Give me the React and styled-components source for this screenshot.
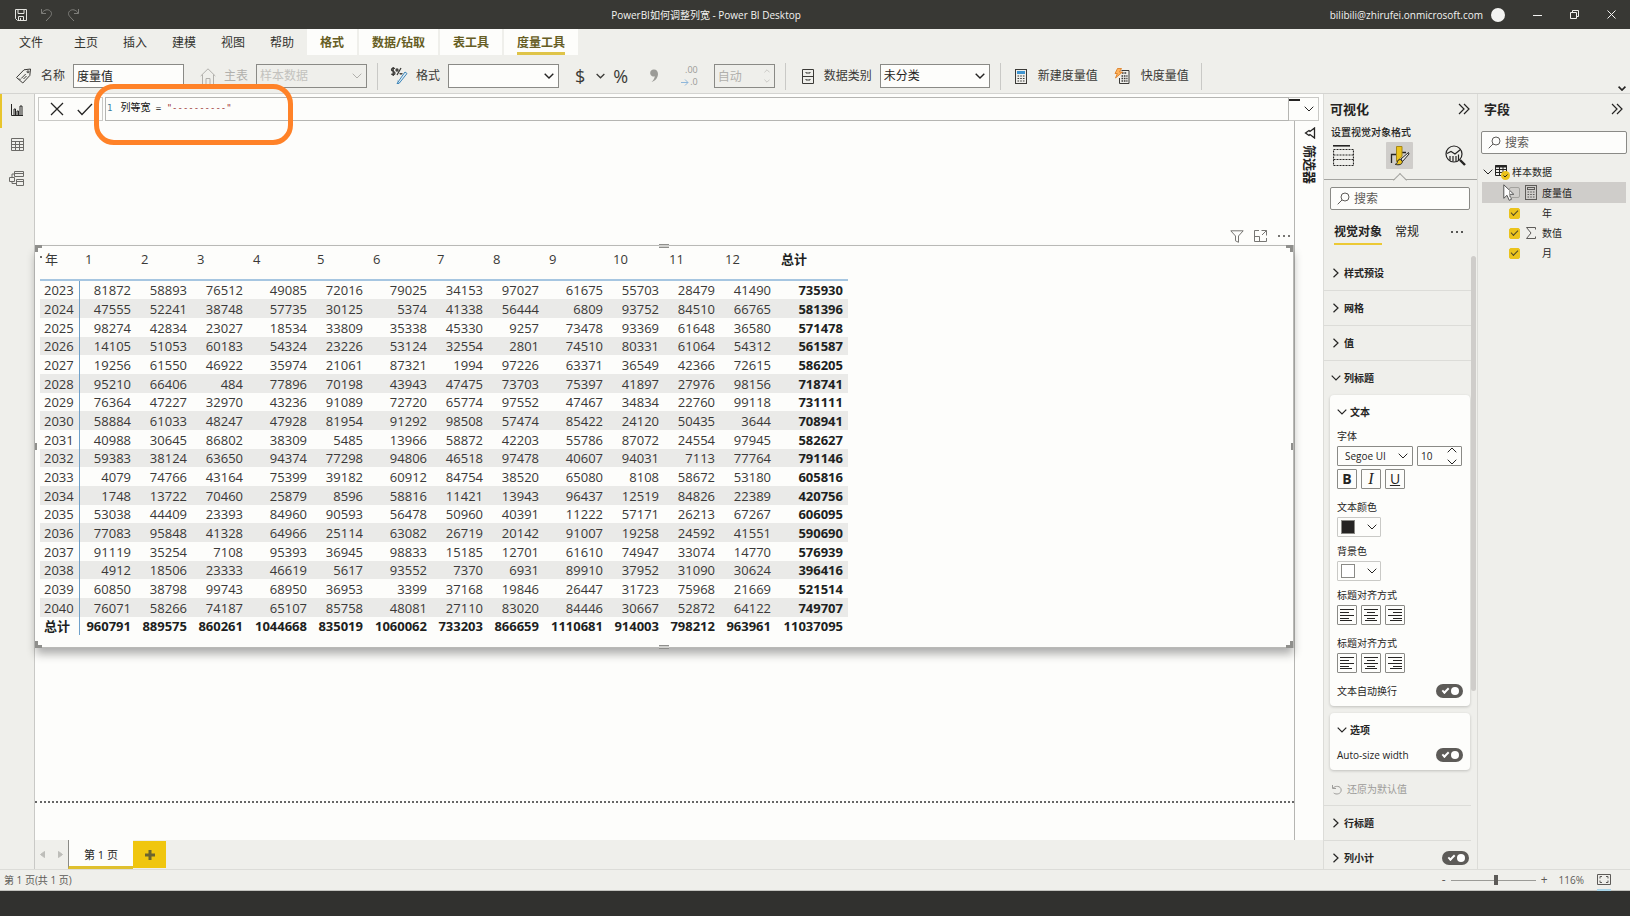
import React from "react";
import styled, { createGlobalStyle, css } from "styled-components";

const color = {
  title: "#383834",
  chrome: "#efefeb",
  paper: "#fdfdfb",
  line: "#c9c9c6",
  soft: "#dcdcd8",
  control: "#8a8a86",
  ink: "#252423",
  grey: "#5d5b58",
  muted: "#b1b0ac",
};

const Global = createGlobalStyle`
  *, *::before, *::after { box-sizing: border-box; }
  body {
    margin: 0;
    background: ${color.chrome};
    color: ${color.ink};
    font: 12px/16px "Open Sans", "Noto Sans CJK SC", sans-serif;
  }
  button, input, select { font: inherit; color: inherit; margin: 0; padding: 0; border: 0; background: none; border-radius: 0; }
  input, select { min-width: 0; outline: none; }
  h2, h3, p, ul { margin: 0; padding: 0; font: inherit; list-style: none; }
  svg { display: block; flex: none; }
`;

const Icon = ({ size = 16, w, h, box, sw = 1, children }) => (
  <svg
    width={w || size}
    height={h || size}
    viewBox={box || `0 0 ${w || size} ${h || size}`}
    fill="none"
    stroke="currentColor"
    strokeWidth={sw}
    aria-hidden="true"
  >
    {children}
  </svg>
);

const ChevronDown = ({ w = 10, h = 6, sw = 1 }) => (
  <Icon w={w} h={h} box="0 0 10 6" sw={sw}><path d="M.7.7 5 5 9.3.7" /></Icon>
);
const ChevronUp = ({ w = 10, h = 6 }) => (
  <Icon w={w} h={h} box="0 0 10 6"><path d="M.7 5.3 5 1l4.300 4.300" /></Icon>
);
const ChevronRight = () => (
  <Icon w={10} h={10} sw={1.200}><path d="M2.500.7 7 5 2.500 9.300" /></Icon>
);
const DoubleChevron = () => (
  <Icon w={12} h={12} sw={1.200}><path d="M1 1l5 5-5 5M6 1l5 5-5 5" /></Icon>
);
const SearchIcon = () => (
  <Icon w={13} h={13}><circle cx="8" cy="5" r="4" /><path d="M5 8 .7 12.300" /></Icon>
);
const CalcIcon = ({ tint = "none" }) => (
  <Icon w={12} h={15}>
    <rect x=".5" y=".5" width="11" height="14" />
    <rect x="2.500" y="2.500" width="7" height="2" fill={tint} stroke={tint === "none" ? "currentColor" : tint} />
    <path d="M2.500 7h7M2.500 9.500h7M2.500 12h7" strokeWidth="1.200" strokeDasharray="1.600 1.100" />
  </Icon>
);

/* Shell */
const Shell = styled.div`
  min-height: 100vh;
  display: grid;
  grid-template-columns: minmax(0, 1fr);
  grid-template-rows: auto auto auto minmax(0, 1fr) auto auto;
`;

const TitleBar = styled.header`
  height: 29px;
  display: grid;
  grid-template-columns: 1fr auto 1fr;
  align-items: center;
  background: ${color.title};
  color: #f3f3f1;
  font-size: 10px;
`;
const QuickActions = styled.div`
  display: flex;
  gap: 12px;
  padding-left: 14px;
`;
const QuickButton = styled.button`
  color: ${(p) => (p.$dim ? "#7e7e7a" : "#e4e4e0")};
`;
const WindowTitle = styled.div`
  white-space: nowrap;
  padding-right: 218px;
`;
const Account = styled.div`
  display: flex;
  align-items: center;
  justify-content: flex-end;
  gap: 8px;
`;
const Avatar = styled.span`
  width: 14px;
  height: 14px;
  border-radius: 50%;
  background: #f3f3f1;
`;
const WindowButtons = styled.div`
  display: flex;
  gap: 25px;
  padding: 0 13px 0 18px;
`;
const WindowButton = styled.button`
  display: grid;
  place-items: center;
  width: 12px;
  height: 12px;
`;

const MenuBar = styled.nav`
  height: 26px;
  display: flex;
  padding-left: 7px;
`;
const MenuTab = styled.button`
  position: relative;
  height: 26px;
  padding: 2px 13px 0 12px;
  white-space: nowrap;
  color: #33332f;
  ${(p) =>
    p.$context &&
    css`
      margin-right: 2px;
      padding: 2px 13px 0;
      background: ${color.paper};
      color: #665d24;
      font-weight: 700;
    `}
  ${(p) =>
    p.$active &&
    css`
      &::after {
        content: "";
        position: absolute;
        left: 13px;
        right: 13px;
        bottom: 0;
        height: 3px;
        background: #dfc448;
      }
    `}
`;
const Gap = styled.span`
  width: ${(p) => p.$w ?? 0}px;
`;

const Ribbon = styled.div`
  height: 39px;
  display: flex;
  align-items: center;
  padding: 4px 4px 0 15px;
  border-bottom: 1px solid #d4d4d1;
`;
const Group = styled.div`
  display: flex;
  align-items: center;
  gap: 8px;
  height: 27px;
  padding: 0 ${(p) => p.$end ?? 10}px 0 ${(p) => p.$start ?? 12}px;
  border-right: 1px solid ${color.line};
`;
const Pair = styled.label`
  display: flex;
  align-items: center;
  gap: 8px;
  white-space: nowrap;
  color: ${(p) => (p.$dim ? color.muted : "#3b3a37")};
`;
const RibbonButton = styled.button`
  display: flex;
  align-items: center;
  gap: 11px;
  height: 24px;
  white-space: nowrap;
  color: ${(p) => (p.$dim ? "#9b9b97" : "#3b3a37")};
`;
const Glyph = styled.span`
  font-size: 18px;
  line-height: 20px;
`;
const Decimals = styled.span`
  display: grid;
  justify-items: end;
  font-size: 9px;
  line-height: 12px;
  color: #9b9b97;
`;
const DecimalStep = styled.span`
  display: flex;
  align-items: center;
  gap: 1px;
  svg { color: #8fb7da; }
`;
const Box = styled.span`
  display: grid;
  align-items: center;
  width: ${(p) => p.$w}px;
  height: ${(p) => p.$h ?? 24}px;
  border: 1px solid ${color.control};
  border-radius: ${(p) => p.$r ?? 0}px;
  background: ${(p) => (p.$clear ? "transparent" : color.paper)};
  color: ${(p) => (p.$clear ? color.muted : color.ink)};
  > * { grid-area: 1 / 1; }
  > input, > select {
    width: 100%;
    height: 100%;
    padding-left: ${(p) => p.$pad ?? 3}px;
    appearance: none;
  }
  > svg { justify-self: end; margin-right: 4px; pointer-events: none; }
`;
const Spinner = styled.span`
  justify-self: end;
  display: grid;
  gap: 6px;
  margin-right: 4px;
`;
const Push = styled.button`
  margin-left: auto;
  align-self: flex-end;
  padding: 2px 0;
`;

const Body = styled.div`
  display: grid;
  grid-template-columns: 35px minmax(0, 1fr) 154px 153px;
  min-height: 0;
`;
const Rail = styled.nav`
  display: flex;
  flex-direction: column;
  border-right: 1px solid ${color.line};
`;
const RailButton = styled.button`
  display: grid;
  place-items: center;
  height: 34px;
  padding: 0 2px 2px 0;
  color: ${(p) => (p.$active ? color.ink : "#6b6a67")};
  border-left: 2px solid ${(p) => (p.$active ? "#e8c52c" : "transparent")};
`;

const Work = styled.main`
  display: flex;
  flex-direction: column;
  background: ${color.paper};
`;
const FormulaBar = styled.div`
  position: relative;
  display: flex;
  height: 27px;
  padding: 3px 4px 0 3px;
`;
const FormulaActions = styled.div`
  display: flex;
  align-items: center;
  justify-content: space-between;
  width: 65px;
  padding: 0 9px 0 11px;
  border: 1px solid ${color.line};
  margin-right: 2px;
`;
const Editor = styled.div`
  flex: 1;
  padding: 2px 1px;
  border: 1px solid #b5b5b2;
  font: 9px/16px "DejaVu Sans Mono", "Noto Sans CJK SC", monospace;
  white-space: pre;
  color: #111;
`;
const LineNumber = styled.span`
  margin-right: 8px;
  color: #3d7f9c;
`;
const MeasureName = styled.span`
  font-size: 10px;
`;
const StringToken = styled.span`
  color: #9c3535;
`;
const Expand = styled.button`
  display: grid;
  place-items: center;
  width: 30px;
  padding-left: 10px;
  border: 1px solid ${color.line};
  border-left: 0;
  position: relative;
  &::before {
    content: "";
    position: absolute;
    left: 0;
    top: 1px;
    width: 11px;
    height: 2px;
    background: ${color.ink};
  }
`;
const Callout = styled.div`
  position: absolute;
  z-index: 2;
  left: 59px;
  top: -10px;
  width: 199px;
  height: 61px;
  border: 5px solid #ff8228;
  border-radius: 20px;
  pointer-events: none;
`;
const Stage = styled.div`
  flex: 1;
  display: grid;
  grid-template-columns: minmax(0, 1fr) 28px;
`;
const Canvas = styled.section`
  display: flex;
  flex-direction: column;
  border-right: 1px solid #b5b5b2;
  padding-bottom: 37px;
`;
const Page = styled.div`
  flex: 1;
  padding: 106px 0 40px;
  border-bottom: 2px dotted #666;
`;
const VisualActions = styled.div`
  display: flex;
  justify-content: flex-end;
  align-items: center;
  gap: 10px;
  height: 18px;
  padding-right: 3px;
  color: #777673;
  button { display: grid; place-items: center; height: 14px; }
`;
const Visual = styled.div`
  position: relative;
  padding: 0 5px 12px;
  border: 1px solid #b9b9b6;
  border-left: 0;
  background: ${color.paper};
  box-shadow: 0 7px 9px -1px rgba(0, 0, 0, 0.32);
`;
const handleSpot = {
  nw: "left:0;top:-1px;border-width:3px 0 0 3px;width:7px;height:7px;",
  ne: "right:0;top:-1px;border-width:3px 3px 0 0;width:7px;height:7px;",
  sw: "left:0;bottom:-1px;border-width:0 0 3px 3px;width:7px;height:7px;",
  se: "right:0;bottom:-1px;border-width:0 3px 3px 0;width:7px;height:7px;",
  n: "left:50%;top:-2px;border-width:1px 0;width:10px;height:4px;margin-left:-5px;background:#d0d0cd;",
  s: "left:50%;bottom:-2px;border-width:1px 0;width:10px;height:4px;margin-left:-5px;background:#d0d0cd;",
  w: "left:0;top:50%;border-width:0 0 0 2px;width:2px;height:7px;margin-top:-4px;",
  e: "right:0;top:50%;border-width:0 2px 0 0;width:2px;height:7px;margin-top:-4px;",
};
const Handle = styled.span`
  position: absolute;
  border: 0 solid #8f8f8c;
  ${(p) => handleSpot[p.$at]}
`;
const SortMark = styled.span`
  position: absolute;
  left: 5px;
  top: 10px;
  width: 2px;
  height: 2px;
  background: #6b6a67;
`;

const Matrix = styled.table`
  table-layout: fixed;
  width: 808px;
  border-spacing: 0;
  font-size: 13px;
  line-height: 18px;
  color: #3a3937;
  th, td { padding: 0 5px; font-weight: 400; }
  thead th {
    height: 35px;
    padding-top: 4px;
    vertical-align: top;
    text-align: left;
    border-bottom: 2px solid #a6c6e1;
  }
  tbody tr { height: 19px; }
  tbody tr:nth-child(3n + 1) { height: 18px; }
  tbody tr:nth-child(even) { background: #eaeae8; }
  tbody th { text-align: left; border-right: 1px solid #6fa1cb; }
  tbody th, tbody td { padding-left: 4px; }
  tbody td { text-align: right; }
  td:last-child, thead th:last-child, tbody tr:last-child > * { font-weight: 700; color: #201f1e; }
`;
const Col = styled.col`
  width: ${(p) => p.$w}px;
`;

const FilterStrip = styled.aside`
  display: flex;
  flex-direction: column;
  align-items: center;
  gap: 6px;
  padding: 6px 0 0 2px;
`;
const FilterLabel = styled.span`
  writing-mode: vertical-rl;
  text-orientation: sideways;
  font-size: 13px;
  font-weight: 700;
`;
const PageTabs = styled.div`
  display: flex;
  height: 29px;
  background: ${color.chrome};
`;
const PageArrows = styled.div`
  display: flex;
  align-items: center;
  justify-content: space-between;
  width: 33px;
  padding: 0 5px;
  color: #bdbdb9;
`;
const PageTab = styled.button`
  width: 65px;
  padding-top: 3px;
  border-left: 1px solid #8a8a86;
  border-bottom: 3px solid #dfc02f;
  background: ${color.paper};
  font-size: 11px;
`;
const AddPage = styled.button`
  display: grid;
  place-items: center;
  width: 33px;
  margin: 1px 0;
  background: #f0c60f;
  color: #6b6430;
`;

/* Side panes */
const Pane = styled.aside`
  display: flex;
  flex-direction: column;
  min-height: 0;
  border-left: 1px solid ${color.soft};
`;
const PaneHead = styled.div`
  display: flex;
  align-items: center;
  justify-content: space-between;
  height: 30px;
  padding: 0 7px 0 6px;
  h2 { font-size: 13px; font-weight: 700; }
`;
const PaneSub = styled.p`
  padding-left: 7px;
  font-size: 10px;
  font-weight: 500;
`;
const ModeRow = styled.div`
  display: flex;
  justify-content: space-between;
  height: 40px;
  padding: 2px 8px 0 6px;
  border-bottom: 1px solid #a5a5a1;
`;
const ModeButton = styled.button`
  position: relative;
  display: grid;
  place-items: center;
  width: 27px;
  height: 27px;
  border-radius: 1px;
  background: ${(p) => (p.$active ? "#cfcdca" : "none")};
  ${(p) =>
    p.$active &&
    css`
      &::after {
        content: "";
        position: absolute;
        left: 9px;
        top: 33px;
        width: 10px;
        height: 10px;
        border: solid #a5a5a1;
        border-width: 1px 0 0 1px;
        background: linear-gradient(135deg, ${color.chrome} 50%, transparent 50%);
        transform: rotate(45deg);
      }
    `}
`;
const Search = styled.label`
  display: flex;
  align-items: center;
  gap: 4px;
  height: 23px;
  margin: ${(p) => p.$m};
  padding-left: 6px;
  border: 1px solid ${color.control};
  border-radius: 2px;
  background: ${color.paper};
  color: ${color.grey};
  input { flex: 1; width: 100%; }
  input::placeholder { color: ${color.grey}; opacity: 1; }
`;
const FormatTabs = styled.div`
  display: flex;
  align-items: center;
  gap: 13px;
  height: 46px;
  padding: 0 13px 2px 10px;
`;
const FormatTab = styled.button`
  height: 26px;
  padding-top: 1px;
  white-space: nowrap;
  border-bottom: 2px solid ${(p) => (p.$active ? "#ecc935" : "transparent")};
  font-weight: ${(p) => (p.$active ? 700 : 400)};
`;
const MoreButton = styled.button`
  margin-left: auto;
`;
const ScrollArea = styled.div`
  flex: 1 1 0;
  min-height: 0;
  overflow: hidden;
  display: grid;
  grid-template-columns: minmax(0, 1fr) 5px;
  padding-right: 1px;
  font-size: 10px;
`;
const Thumb = styled.div`
  height: 435px;
  border-radius: 3px;
  background: #cfcdca;
`;
const Section = styled.div`
  display: flex;
  align-items: center;
  justify-content: space-between;
  height: ${(p) => (p.$open ? 34 : 35)}px;
  padding: 0 2px 0 7px;
  border-bottom: ${(p) => (p.$open ? 0 : 1)}px solid ${color.soft};
`;
const SectionButton = styled.button`
  display: flex;
  align-items: center;
  gap: 3px;
  height: 20px;
  font-weight: 700;
`;
const Card = styled.div`
  margin: 0 1px 7px 6px;
  padding: 7px;
  border-radius: 4px;
  background: ${color.paper};
  box-shadow: 0 1px 3px rgba(0, 0, 0, 0.2);
`;
const Field = styled.div`
  display: grid;
  gap: 2px;
  margin-top: ${(p) => (p.$wide ? 10 : 6)}px;
`;
const Line = styled.div`
  display: flex;
  gap: 4px;
  margin-top: ${(p) => (p.$below ? 3 : 0)}px;
`;
const ToggleRow = styled.label`
  display: flex;
  align-items: center;
  justify-content: space-between;
  height: 16px;
  margin-top: ${(p) => (p.$near ? 7 : 10)}px;
`;
const SmallButton = styled.button`
  display: grid;
  place-items: center;
  width: 20px;
  height: 20px;
  border: 1px solid ${color.control};
  border-radius: 1px;
  font: ${(p) => p.$font};
`;
const ColorButton = styled.button`
  display: flex;
  align-items: center;
  justify-content: space-between;
  width: 44px;
  height: 20px;
  padding: 0 3px;
  border: 1px solid ${color.line};
  border-radius: 1px;
`;
const Swatch = styled.span`
  width: 14px;
  height: 14px;
  border: 1px solid ${color.control};
  background: ${(p) => p.$fill};
`;
const Toggle = styled.input`
  appearance: none;
  position: relative;
  flex: none;
  width: 27px;
  height: 14px;
  border-radius: 7px;
  background: ${color.grey};
  &::before {
    content: "";
    position: absolute;
    left: 6px;
    top: 4px;
    width: 7px;
    height: 4px;
    border: solid #fff;
    border-width: 0 0 2px 2px;
    transform: rotate(-45deg);
  }
  &::after {
    content: "";
    position: absolute;
    right: 4px;
    top: 3px;
    width: 8px;
    height: 8px;
    border-radius: 50%;
    background: #fff;
  }
`;
const Reset = styled.button`
  display: flex;
  align-items: center;
  gap: 5px;
  width: 100%;
  height: 29px;
  padding: 0 0 4px 8px;
  border-bottom: 1px solid ${color.soft};
  color: #9d9c99;
`;

const Tree = styled.ul`
  font-size: 10px;
  margin: 8px 4px 0 4px;
`;
const TreeRow = styled.li`
  display: flex;
  align-items: center;
  height: ${(p) => (p.$active ? 21 : 20)}px;
  padding-left: ${(p) => (p.$root ? 1 : 27)}px;
  background: ${(p) => (p.$active ? "#cfcdca" : "none")};
  label { display: flex; align-items: center; }
`;
const TreeToggle = styled.button`
  display: flex;
  align-items: center;
  gap: 2px;
`;
const Check = styled.input`
  appearance: none;
  position: relative;
  width: 11px;
  height: 11px;
  border-radius: 2px;
  border: 1px solid #a3a29e;
  &:checked { background: #ebc31c; border-color: #ebc31c; }
  &:checked::after {
    content: "";
    position: absolute;
    left: 1px;
    top: 1px;
    width: 7px;
    height: 4px;
    border: solid #4f4724;
    border-width: 0 0 1px 1px;
    transform: rotate(-45deg);
  }
`;
const Slot = styled.span`
  display: grid;
  place-items: center;
  width: 22px;
  color: ${color.grey};
`;
const Pointer = styled.span`
  position: absolute;
  left: 21px;
  top: 1px;
`;
const PointerHost = styled.span`
  position: relative;
  width: 0;
  height: 20px;
  margin-left: -27px;
  margin-right: 27px;
`;

const StatusBar = styled.footer`
  display: flex;
  align-items: center;
  justify-content: space-between;
  height: 22px;
  padding: 0 19px 0 4px;
  border-top: 1px solid ${color.soft};
  border-bottom: 1px solid #c2c2be;
  font-size: 10px;
  color: ${color.grey};
`;
const Zoom = styled.div`
  display: flex;
  align-items: center;
  gap: 5px;
`;
const ZoomRange = styled.input`
  appearance: none;
  width: 85px;
  height: 12px;
  &::-webkit-slider-runnable-track { height: 10px; background: linear-gradient(#9b9b97, #9b9b97) center / 100% 1px no-repeat; }
  &::-webkit-slider-thumb { appearance: none; width: 4px; height: 10px; background: #5d5b58; }
`;
const ZoomStep = styled.button`
  font-size: 12px;
`;
const ZoomValue = styled.span`
  margin: 0 8px 0 6px;
`;
const FitButton = styled.button`
  padding: 5px 0 4px;
  border-bottom: 2px solid #a8d4e8;
`;
const TaskBar = styled.div`
  height: 25px;
  background: #31312f;
`;

const months = ["1", "2", "3", "4", "5", "6", "7", "8", "9", "10", "11", "12"];
const widths = [40, 56, 56, 56, 64, 56, 64, 56, 56, 64, 56, 56, 56, 72];
const rows = `2023 81872 58893 76512 49085 72016 79025 34153 97027 61675 55703 28479 41490 735930
2024 47555 52241 38748 57735 30125 5374 41338 56444 6809 93752 84510 66765 581396
2025 98274 42834 23027 18534 33809 35338 45330 9257 73478 93369 61648 36580 571478
2026 14105 51053 60183 54324 23226 53124 32554 2801 74510 80331 61064 54312 561587
2027 19256 61550 46922 35974 21061 87321 1994 97226 63371 36549 42366 72615 586205
2028 95210 66406 484 77896 70198 43943 47475 73703 75397 41897 27976 98156 718741
2029 76364 47227 32970 43236 91089 72720 65774 97552 47467 34834 22760 99118 731111
2030 58884 61033 48247 47928 81954 91292 98508 57474 85422 24120 50435 3644 708941
2031 40988 30645 86802 38309 5485 13966 58872 42203 55786 87072 24554 97945 582627
2032 59383 38124 63650 94374 77298 94806 46518 97478 40607 94031 7113 77764 791146
2033 4079 74766 43164 75399 39182 60912 84754 38520 65080 8108 58672 53180 605816
2034 1748 13722 70460 25879 8596 58816 11421 13943 96437 12519 84826 22389 420756
2035 53038 44409 23393 84960 90593 56478 50960 40391 11222 57171 26213 67267 606095
2036 77083 95848 41328 64966 25114 63082 26719 20142 91007 19258 24592 41551 590690
2037 91119 35254 7108 95393 36945 98833 15185 12701 61610 74947 33074 14770 576939
2038 4912 18506 23333 46619 5617 93552 7370 6931 89910 37952 31090 30624 396416
2039 60850 38798 99743 68950 36953 3399 37168 19846 26447 31723 75968 21669 521514
2040 76071 58266 74187 65107 85758 48081 27110 83020 84446 30667 52872 64122 749707
总计 960791 889575 860261 1044668 835019 1060062 733203 866659 1110681 914003 798212 963961 11037095`
  .split("\n")
  .map((line) => line.split(" "));

const alignPaths = {
  left: "M0 .5h14M0 3.500h9M0 6.500h14M0 9.500h9M0 11.500h12",
  center: "M0 .5h14M3 3.500h8M0 6.500h14M3 9.500h8M1 11.500h12",
  right: "M0 .5h14M5 3.500h9M0 6.500h14M5 9.500h9M2 11.500h12",
};
const AlignButtons = () => (
  <Line>
    {Object.keys(alignPaths).map((k) => (
      <SmallButton key={k} aria-label={k}>
        <Icon w={14} h={12}><path d={alignPaths[k]} /></Icon>
      </SmallButton>
    ))}
  </Line>
);

const Top = () => (
  <>
    <TitleBar>
      <QuickActions>
        <QuickButton aria-label="保存">
          <Icon w={14} h={14}><path d="M1.500 1.500h11v11h-9l-2-2zM4 1.500v4h6v-4M4.500 12.500v-4h5v4M6.500 10v2.500" /></Icon>
        </QuickButton>
        <QuickButton $dim aria-label="撤消">
          <Icon w={14} h={14}><path d="M1.500 1v4.500H6M1.800 5.200C4 1.500 8 .8 10.300 3c2.200 2.200 1 4.500-.5 6L6 13" /></Icon>
        </QuickButton>
        <QuickButton $dim aria-label="恢复">
          <Icon w={14} h={14}><path d="M12.500 1v4.500H8M12.200 5.200C10 1.500 6 .8 3.700 3c-2.200 2.200-1 4.500.5 6L8 13" /></Icon>
        </QuickButton>
      </QuickActions>
      <WindowTitle>PowerBI如何调整列宽 - Power BI Desktop</WindowTitle>
      <Account>
        bilibili@zhirufei.onmicrosoft.com
        <Avatar />
        <WindowButtons>
          <WindowButton aria-label="最小化"><Icon w={9} h={9}><path d="M0 5.500h9" /></Icon></WindowButton>
          <WindowButton aria-label="还原"><Icon w={9} h={9}><path d="M.5 2.500h6v6h-6zM2.500 2V.5h6v6H7" /></Icon></WindowButton>
          <WindowButton aria-label="关闭"><Icon w={9} h={9}><path d="M.5.5l8 8M8.500.5l-8 8" /></Icon></WindowButton>
        </WindowButtons>
      </Account>
    </TitleBar>
    <MenuBar>
      <MenuTab>文件</MenuTab>
      <Gap $w={6} />
      {["主页", "插入", "建模", "视图", "帮助"].map((t) => <MenuTab key={t}>{t}</MenuTab>)}
      <MenuTab $context>格式</MenuTab>
      <MenuTab $context>数据/钻取</MenuTab>
      <MenuTab $context>表工具</MenuTab>
      <MenuTab $context $active>度量工具</MenuTab>
    </MenuBar>
    <Ribbon>
      <Group $start={0}>
        <Pair>
          <Icon w={18} h={18}>
            <path d="M1.500 10.500 9 2.800l6.500-.8-.7 6.500-7 7.500zM4 11.500l1.500 1.500" />
            <path d="M6.200 11.500l4.500-4.500M8.500 12l3-3" /><circle cx="13" cy="4.800" r="1" />
          </Icon>
          名称
          <Box $w={111}><input defaultValue="度量值" /></Box>
        </Pair>
        <Gap />
        <Pair $dim>
          <Icon w={16} h={17}><path d="M.7 8 8 .8 15.300 8M2.500 6.500v10h3.500v-6h4v6h3.500v-10" /></Icon>
          主表
          <Box $w={111} $clear><select disabled><option>样本数据</option></select><ChevronDown /></Box>
        </Pair>
      </Group>
      <Group>
        <Pair>
          <Icon w={18} h={18}>
            <path d="M5 1.500C3 .8 1.500 1.500 1.500 3S5 4.300 5 6 3 8 1.200 7M3.200 0v9M7 8l4-7M8 3a1 1 0 1 1-2 0 1 1 0 0 1 2 0M12 6a1 1 0 1 1-2 0" strokeWidth="1.300" />
            <path d="M7 16.500 15 5l2 1.500L9 16.500H7zM7.500 14l2 1.500" stroke="#3f86b8" fill="#dcebf5" />
          </Icon>
          格式
          <Box $w={111}><select><option> </option></select><ChevronDown sw={1.400} /></Box>
        </Pair>
        <Gap />
        <RibbonButton aria-label="货币"><Glyph>$</Glyph><ChevronDown w={9} sw={1.400} /></RibbonButton>
        <RibbonButton aria-label="百分比"><Glyph>%</Glyph></RibbonButton>
        <Gap $w={6} />
        <RibbonButton $dim aria-label="千位分隔符">
          <Icon w={9} h={14}><path d="M4 .5a3.500 3.500 0 1 0 .8 6.800C4.500 9.500 3.500 11.500 1.500 13 5.500 12 8 8.500 8 5 8 2.500 6.500.5 4 .5z" fill="currentColor" stroke="none" /></Icon>
        </RibbonButton>
        <Gap $w={6} />
        <Pair $dim>
          <Decimals>
            <span>.00</span>
            <DecimalStep>
              <Icon w={8} h={7}><path d="M0 3.500h7M4 .5l3 3-3 3" /></Icon>
              <span>.0</span>
            </DecimalStep>
          </Decimals>
          <Gap />
          <Box $w={61} $clear>
            <input disabled defaultValue="自动" aria-label="小数位数" />
            <Spinner><ChevronUp w={6} h={4} /><ChevronDown w={6} h={4} /></Spinner>
          </Box>
        </Pair>
      </Group>
      <Group $start={14}>
        <Pair>
          <Icon w={16} h={15}><path d="M2.500.5h11v14h-11zM2.500 7.500h11M6 3v1h4V3M6 10v1h4v-1" /></Icon>
          数据类别
          <Box $w={110}><select><option>未分类</option></select><ChevronDown sw={1.400} /></Box>
        </Pair>
      </Group>
      <Group $start={14} $end={12}>
        <RibbonButton><CalcIcon tint="#3f94cf" />新建度量值</RibbonButton>
        <Gap />
        <RibbonButton>
          <Icon w={16} h={17}>
            <path d="M7.500 2.500h7.500v13H5.500V10" />
            <path d="M8 5h5M7.500 8h6M7.500 10.500h6M7.500 13h6" strokeWidth="1.600" strokeDasharray="1.600 .8" />
            <path d="M3.500.5h4L5.500 4h3L1.500 10l1.800-4.500H1z" fill="#ffb35c" stroke="#d9761a" strokeWidth=".8" />
          </Icon>
          快度量值
        </RibbonButton>
      </Group>
      <Push aria-label="折叠功能区"><ChevronDown w={8} h={5} sw={2} /></Push>
    </Ribbon>
  </>
);

const Report = () => (
  <Work>
    <FormulaBar>
      <FormulaActions>
        <button aria-label="取消"><Icon w={14} h={14} sw={1.300}><path d="M1 1l12 12M13 1 1 13" /></Icon></button>
        <button aria-label="提交"><Icon w={16} h={13} sw={1.300}><path d="M.8 7 5 11.500 15 1" /></Icon></button>
      </FormulaActions>
      <Editor><LineNumber>1</LineNumber><MeasureName>列等宽</MeasureName>{" = "}<StringToken>"----------"</StringToken></Editor>
      <Expand aria-label="展开公式栏"><ChevronDown /></Expand>
      <Callout />
    </FormulaBar>
    <Stage>
      <Canvas>
        <Page>
          <VisualActions>
            <button aria-label="筛选器"><Icon w={14} h={13}><path d="M.8.8h12.400L8.500 6v6.300l-3-1.500V6z" /></Icon></button>
            <button aria-label="焦点模式"><Icon w={13} h={12}><path d="M5 .5H.5v11h12V8M7.500.5h5v5M12.500.5 8 5M.5 6.500h5v5" /></Icon></button>
            <button aria-label="更多选项"><Icon w={14} h={4}><path d="M1 2h2M6 2h2M11 2h2" strokeWidth="2" /></Icon></button>
          </VisualActions>
          <Visual>
            <Matrix>
              <colgroup>{widths.map((w, i) => <Col key={i} $w={w} />)}</colgroup>
              <thead>
                <tr>
                  <th scope="col">年</th>
                  {months.map((m) => <th scope="col" key={m}>{m}</th>)}
                  <th scope="col">总计</th>
                </tr>
              </thead>
              <tbody>
                {rows.map(([year, ...cells]) => (
                  <tr key={year}>
                    <th scope="row">{year}</th>
                    {cells.map((c, i) => <td key={i}>{c}</td>)}
                  </tr>
                ))}
              </tbody>
            </Matrix>
            <SortMark />
            {Object.keys(handleSpot).map((k) => <Handle key={k} $at={k} />)}
          </Visual>
        </Page>
      </Canvas>
      <FilterStrip>
        <Icon w={12} h={12}><path d="M10.500 1v10L6 7.500l-1 1L1.500 6 5 3.500l1 1z" strokeWidth="1.300" /></Icon>
        <FilterLabel>筛选器</FilterLabel>
      </FilterStrip>
    </Stage>
    <PageTabs>
      <PageArrows>
        <button aria-label="上一页"><Icon w={5} h={7}><path d="M4.500.5v6L.5 3.500z" fill="currentColor" /></Icon></button>
        <button aria-label="下一页"><Icon w={5} h={7}><path d="M.5.5v6l4-3z" fill="currentColor" /></Icon></button>
      </PageArrows>
      <PageTab>第 1 页</PageTab>
      <AddPage aria-label="新建页"><Icon w={10} h={10} sw={3}><path d="M5 0v10M0 5h10" /></Icon></AddPage>
    </PageTabs>
  </Work>
);

const Visualizations = () => (
  <Pane>
    <PaneHead><h2>可视化</h2><button aria-label="折叠"><DoubleChevron /></button></PaneHead>
    <PaneSub>设置视觉对象格式</PaneSub>
    <ModeRow>
      <ModeButton aria-label="生成视觉对象">
        <Icon w={21} h={21}>
          <path d="M0 .8h17" strokeWidth="1.600" />
          <path d="M.5 4.500h20v16H.5zM.5 10h20M.5 14.500h20" strokeDasharray="2 1" strokeWidth="1.200" />
        </Icon>
      </ModeButton>
      <ModeButton $active aria-label="设置格式">
        <Icon w={20} h={20}>
          <path d="M1.500 17V8.500H6M12 6.500h4" strokeWidth="1.300" />
          <path d="M6.500.5h5.500v10l-5.500 5z" fill="#ebc31c" stroke="#a58617" />
          <path d="M18.500 6.500 11 13l1.500 2.500L19 8z" fill="#efefeb" />
          <path d="M10.500 13.500c-2 0-3 1.200-3.200 2.800-.1 1-.8 1.700-2 2 3.500 1.200 7.200.2 7-2.800z" fill="#ebc31c" />
        </Icon>
      </ModeButton>
      <ModeButton aria-label="分析">
        <Icon w={21} h={21} sw={1.200}>
          <circle cx="9" cy="9" r="8" /><path d="M15 15l5 5" strokeWidth="2.400" />
          <path d="M2 8.500l4-2 4 2.500 5.500-4.500M5 11v4.500M8 11v5.500M11 11v5.500M13.500 9.500V15" />
        </Icon>
      </ModeButton>
    </ModeRow>
    <Search $m="7px 7px 0 6px"><SearchIcon /><input placeholder="搜索" aria-label="搜索格式" /></Search>
    <FormatTabs>
      <FormatTab $active>视觉对象</FormatTab>
      <FormatTab>常规</FormatTab>
      <MoreButton aria-label="更多"><Icon w={14} h={4}><path d="M1 2h2M6 2h2M11 2h2" strokeWidth="1.600" /></Icon></MoreButton>
    </FormatTabs>
    <ScrollArea>
      <div>
        {["样式预设", "网格", "值"].map((t) => (
          <Section key={t}><SectionButton><ChevronRight />{t}</SectionButton></Section>
        ))}
        <Section $open><SectionButton><ChevronDown sw={1.200} />列标题</SectionButton></Section>
        <Card>
          <SectionButton><ChevronDown sw={1.200} />文本</SectionButton>
          <Field>
            <label htmlFor="font">字体</label>
            <Line>
              <Box $w={76} $h={20} $r={1} $pad={7}><select id="font"><option>Segoe UI</option></select><ChevronDown /></Box>
              <Box $w={45} $h={20} $r={1}>
                <input defaultValue="10" aria-label="字号" />
                <Spinner><ChevronUp /><ChevronDown /></Spinner>
              </Box>
            </Line>
          </Field>
          <Line $below>
            <SmallButton $font='700 14px/18px "Open Sans", sans-serif'>B</SmallButton>
            <SmallButton $font='italic 16px/18px "Liberation Serif", serif'>I</SmallButton>
            <SmallButton $font='14px/18px "Open Sans", sans-serif'><u>U</u></SmallButton>
          </Line>
          <Field $wide><span>文本颜色</span><ColorButton aria-label="文本颜色"><Swatch $fill="#252423" /><ChevronDown /></ColorButton></Field>
          <Field><span>背景色</span><ColorButton aria-label="背景色"><Swatch $fill="#fff" /><ChevronDown /></ColorButton></Field>
          <Field><span>标题对齐方式</span><AlignButtons /></Field>
          <Field $wide><span>标题对齐方式</span><AlignButtons /></Field>
          <ToggleRow>文本自动换行<Toggle type="checkbox" defaultChecked /></ToggleRow>
        </Card>
        <Card>
          <SectionButton><ChevronDown sw={1.200} />选项</SectionButton>
          <ToggleRow $near>Auto-size width<Toggle type="checkbox" defaultChecked /></ToggleRow>
        </Card>
        <Reset><Icon w={10} h={11}><path d="M.5 1v3.500H4M1 4.200C3 1.500 9 1.500 9.200 6c0 4-5 5-7.500 3" /></Icon>还原为默认值</Reset>
        <Section><SectionButton><ChevronRight />行标题</SectionButton></Section>
        <Section><SectionButton><ChevronRight />列小计</SectionButton><Toggle type="checkbox" defaultChecked aria-label="列小计" /></Section>
      </div>
      <Thumb />
    </ScrollArea>
  </Pane>
);

const Fields = () => (
  <Pane>
    <PaneHead><h2>字段</h2><button aria-label="折叠"><DoubleChevron /></button></PaneHead>
    <Search $m="7px 3px 0 3px"><SearchIcon /><input placeholder="搜索" aria-label="搜索字段" /></Search>
    <Tree>
      <TreeRow $root>
        <TreeToggle>
          <ChevronDown />
          <Icon w={15} h={15}>
            <path d="M.5.5h11v10H.5z" /><path d="M0 1.500h12" strokeWidth="2" /><path d="M.5 4.500h11M.5 7.500h11M4.500 1v9.500M8 1v9.500" />
            <circle cx="10.500" cy="10.500" r="4.500" fill="#ebc31c" stroke="none" />
            <path d="M8.500 10.500l1.500 1.500 2.500-2.500" />
          </Icon>
          样本数据
        </TreeToggle>
      </TreeRow>
      <TreeRow $active>
        <PointerHost>
          <Pointer>
            <Icon w={12} h={18}><path d="M.8.8v13.500l3.200-3 2.200 5 2.300-1-2.200-5h4.500z" fill="#fff" stroke="#555" /></Icon>
          </Pointer>
        </PointerHost>
        <label><Check type="checkbox" /><Slot><CalcIcon /></Slot>度量值</label>
      </TreeRow>
      <TreeRow><label><Check type="checkbox" defaultChecked /><Slot />年</label></TreeRow>
      <TreeRow>
        <label>
          <Check type="checkbox" defaultChecked />
          <Slot><Icon w={10} h={12}><path d="M9.500 2.500v-2h-9L5 6 .5 11.500h9v-2" /></Icon></Slot>
          数值
        </label>
      </TreeRow>
      <TreeRow><label><Check type="checkbox" defaultChecked /><Slot />月</label></TreeRow>
    </Tree>
  </Pane>
);

export default function App() {
  return (
    <>
      <Global />
      <Shell>
        <Top />
        <Body>
          <Rail>
            <RailButton $active aria-label="报表"><Icon w={12} h={12}><path d="M.5 0v11.500H12M3 5h1.500v6.500H3zM6 7h1.500v4.500H6zM9 2h2v9.500H9z" /></Icon></RailButton>
            <RailButton aria-label="数据"><Icon w={13} h={13}><path d="M.5.5h12v12H.5zM.5 3.500h12M.5 6.500h12M.5 9.500h12M4.500 3.500v9M8.500 3.500v9" /></Icon></RailButton>
            <RailButton aria-label="模型"><Icon w={16} h={15}><path d="M5.500.5h9v5h-9zM5.500 2.500h9M.5 6.500h5v4h-5zM7.500 8.500h7v6h-7zM7.500 10.500h7M3 6.500V3h2.500M3 10.500v2h4.500" /></Icon></RailButton>
          </Rail>
          <Report />
          <Visualizations />
          <Fields />
        </Body>
        <StatusBar>
          <span>第 1 页(共 1 页)</span>
          <Zoom>
            <ZoomStep aria-label="缩小">-</ZoomStep>
            <ZoomRange type="range" min="10" max="210" defaultValue="116" aria-label="缩放" />
            <ZoomStep aria-label="放大">+</ZoomStep>
            <ZoomValue>116%</ZoomValue>
            <FitButton aria-label="适应页面大小">
              <Icon w={14} h={11}><path d="M.5.5h13v10H.5zM3 4.500v-2h2M9 2.500h2v2M11 6.500v2H9M5 8.500H3v-2" /></Icon>
            </FitButton>
          </Zoom>
        </StatusBar>
        <TaskBar />
      </Shell>
    </>
  );
}
